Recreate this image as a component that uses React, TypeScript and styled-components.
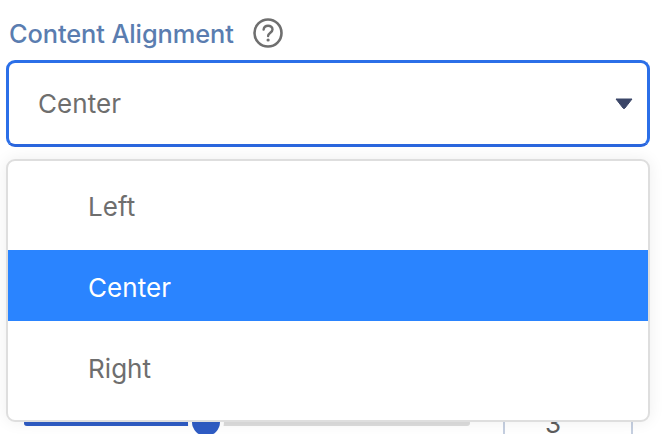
import React from "react";
import styled, { createGlobalStyle } from "styled-components";

const Global = createGlobalStyle`
  html, body { margin: 0; padding: 0; background: #fff; }
  body { width: 664px; height: 434px; overflow: hidden; font-family: Inter, "Liberation Sans", sans-serif; }
`;

const Page = styled.div`
  position: relative;
  width: 664px;
  height: 434px;
  overflow: hidden;
  padding: 16px 14px 0 6px;
  box-sizing: border-box;
`;

const LabelRow = styled.div`
  display: flex;
  align-items: center;
  height: 34px;
  margin-bottom: 10px;
  padding-left: 3px;
  gap: 18px;
`;

const Label = styled.span`
  font-size: 25.4px;
  font-weight: 500;
  letter-spacing: -0.1px;
  color: #5a7db0;
`;

const HelpIcon = styled.svg`
  width: 32px;
  height: 32px;
  flex: none;
`;

const Select = styled.div`
  box-sizing: border-box;
  height: 87px;
  border: 3px solid #2b6fe8;
  border-bottom-color: #2a66dd;
  border-radius: 9px;
  background: #fff;
  display: flex;
  align-items: center;
  justify-content: space-between;
  padding: 0 14px 0 29px;
  font-size: 26px;
  letter-spacing: 0.05px;
  color: #6e6e6e;
`;

const Caret = styled.svg`
  width: 18px;
  height: 11px;
  flex: none;
`;

const SliderRow = styled.div`
  display: flex;
  align-items: flex-start;
  margin: 257px 0 0 18px;
`;

const Track = styled.div`
  position: relative;
  width: 446px;
  height: 6px;
  margin-top: 16px;
  border-radius: 3px;
  background: #dcdcdc;
`;

const Fill = styled.div`
  width: 164px;
  height: 100%;
  border-radius: 3px 0 0 3px;
  background: #2f5cc4;
`;

const Thumb = styled.div`
  position: absolute;
  left: 168px;
  top: -12px;
  width: 28px;
  height: 28px;
  border-radius: 50%;
  background: #2f5cc4;
  box-shadow: 0 0 0 4px #fff;
`;

const NumberBox = styled.div`
  box-sizing: border-box;
  width: 130px;
  height: 60px;
  margin: -8px 0 0 33px;
  border: 1px solid #c5cfe0;
  border-width: 0 2px;
  padding: 13px 0 0 40px;
  font-size: 26px;
  line-height: 30px;
  color: #5c5c5c;
`;

const Menu = styled.ul`
  position: absolute;
  left: 6px;
  top: 159px;
  box-sizing: border-box;
  width: 644px;
  height: 263px;
  margin: 0;
  padding: 8px 0 0;
  list-style: none;
  background: #fff;
  border: 2px solid #dedede;
  border-radius: 9px;
  box-shadow: 0 0 16px rgba(0, 0, 0, 0.07);
`;

const Option = styled.li<{ $active?: boolean }>`
  box-sizing: border-box;
  height: 71px;
  margin-bottom: 10px;
  display: flex;
  align-items: center;
  padding: 4px 0 0 80px;
  font-size: 26px;
  letter-spacing: 0.05px;
  color: ${(p) => (p.$active ? "#fff" : "#6e6e6e")};
  background: ${(p) => (p.$active ? "#2a84ff" : "transparent")};
`;

export default function App() {
  return (
    <Page>
      <Global />
      <LabelRow>
        <Label>Content Alignment</Label>
        <HelpIcon viewBox="0 0 32 32" fill="none">
          <circle cx="16" cy="16" r="13.5" stroke="#6f6f6f" strokeWidth="2.6" />
          <path d="M11.6 12.6c.3-2.5 2.1-3.9 4.5-3.9 2.5 0 4.4 1.5 4.4 3.7 0 3.3-4.4 3.3-4.4 6.7" stroke="#6f6f6f" strokeWidth="2.4" strokeLinecap="round" />
          <circle cx="16.1" cy="23" r="1.6" fill="#6f6f6f" />
        </HelpIcon>
      </LabelRow>
      <Select>
        <span>Center</span>
        <Caret viewBox="0 0 18 11">
          <path d="M1 1h16L10 10a1.3 1.3 0 0 1-2 0z" fill="#3b4668" stroke="#3b4668" strokeLinejoin="round" />
        </Caret>
      </Select>
      <SliderRow>
        <Track>
          <Fill />
          <Thumb />
        </Track>
        <NumberBox>3</NumberBox>
      </SliderRow>
      <Menu>
        <Option>Left</Option>
        <Option $active>Center</Option>
        <Option>Right</Option>
      </Menu>
    </Page>
  );
}
